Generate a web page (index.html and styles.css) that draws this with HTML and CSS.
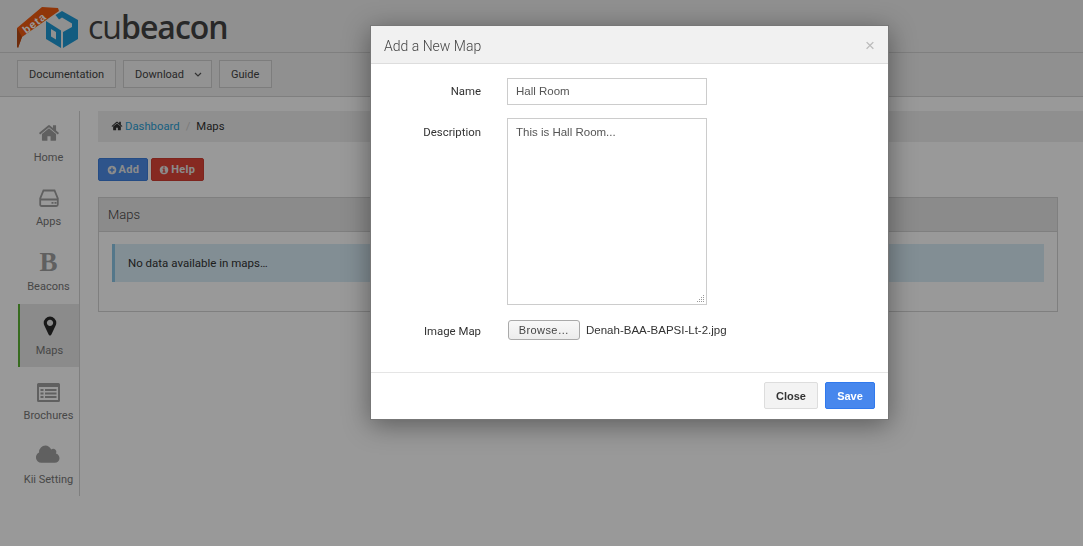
FILE: index.html
```html
<!DOCTYPE html>
<html lang="en">
<head>
<meta charset="UTF-8">
<meta name="viewport" content="width=device-width, initial-scale=1.0">
<title>Cubeacon - Maps</title>
<link rel="stylesheet" href="styles.css">
</head>
<body>
<header class="top">
  <div class="logo">
    <svg class="ribbon" width="42" height="42" viewBox="0 0 42 42">
      <polygon points="25,0 41,1 42,4 5,30 1,41 0,21" fill="#f05a10"/>
      <polygon points="0,21 5,30 1,41 0,40" fill="#b84a14"/>
    </svg>
    <span class="beta">beta</span>
    <svg class="cube" width="33" height="37" viewBox="0 0 33 37">
      <path d="M17 0 33 9V28L18 37V21L27 16V12.500L17 6.500 14 8.500 10.500 4Z" fill="#1f9ad6"/>
      <path fill-rule="evenodd" d="M1 10 16 19.500V37L1 28ZM6 18V25.500L11 28.500V21Z" fill="#1f9ad6"/>
    </svg>
    <span class="word"><span class="word-thin">cu</span>beacon</span>
  </div>
</header>
<nav class="menu">
  <a class="menu-btn">Documentation</a>
  <a class="menu-btn menu-drop">Download
    <svg class="chev" width="8" height="5" viewBox="0 0 8 5"><path d="M1 1 4 4 7 1" fill="none" stroke="#555" stroke-width="1.2"/></svg>
  </a>
  <a class="menu-btn">Guide</a>
</nav>

<div class="layout">
  <aside class="side">
    <a class="side-item">
      <svg width="22" height="22" viewBox="0 0 1792 1792"><path d="M1472 992v480q0 26-19 45t-45 19h-384v-384h-256v384h-384q-26 0-45-19t-19-45v-480q0-1 .5-3t.5-3l575-474 575 474q1 2 1 6zm223-69l-62 74q-8 9-21 11h-3q-13 0-21-7l-692-577-692 577q-12 8-24 7-13-2-21-11l-62-74q-8-10-7-23.5t11-21.5l719-599q32-26 76-26t76 26l244 204v-195q0-14 9-23t23-9h192q14 0 23 9t9 23v408l219 182q10 8 11 21.5t-7 23.5z"/></svg>
      <span>Home</span>
    </a>
    <a class="side-item">
      <svg width="20" height="20" viewBox="0 0 20 20"><path d="M4.500 2.500H15.500L18.800 10.500V16.500Q18.800 18 17.300 18H2.700Q1.200 18 1.200 16.500V10.500Z M1.500 11.500H18.500" fill="none" stroke-width="1.800"/><path d="M12.500 14h2v1.800h-2zM15.500 14h2v1.800h-2z" stroke="none"/></svg>
      <span>Apps</span>
    </a>
    <a class="side-item">
      <b class="bold-b">B</b>
      <span>Beacons</span>
    </a>
    <a class="side-item active">
      <svg width="22" height="22" viewBox="0 0 1792 1792"><path d="M1152 640q0-106-75-181t-181-75-181 75-75 181 75 181 181 75 181-75 75-181zm256 0q0 109-33 179l-364 774q-16 33-47.500 52t-67.500 19-67.500-19-46.500-52l-365-774q-33-70-33-179 0-212 150-362t362-150 362 150 150 362z"/></svg>
      <span>Maps</span>
    </a>
    <a class="side-item">
      <svg width="23" height="19" viewBox="0 0 23 19"><path fill-rule="evenodd" d="M1.500 0H21.500Q23 0 23 1.500V17.500Q23 19 21.500 19H1.500Q0 19 0 17.500V1.500Q0 0 1.500 0ZM2 4V17H21V4Z" stroke="none"/><path d="M3.500 6h3v2h-3zM8 6h11.500v2H8zM3.500 9.500h3v2h-3zM8 9.500h11.500v2H8zM3.500 13h3v2h-3zM8 13h11.500v2H8z" stroke="none"/></svg>
      <span>Brochures</span>
    </a>
    <a class="side-item">
      <svg width="25" height="22" viewBox="0 0 1920 1792"><path d="M1856 1152q0 159-112.500 271.500t-271.500 112.500h-1088q-185 0-316.500-131.500t-131.500-316.500q0-132 71-241.500t187-163.500q-2-28-2-43 0-212 150-362t362-150q158 0 286.500 88t187.500 230q70-62 166-62 106 0 181 75t75 181q0 75-41 138 129 30 213 134.500t84 239.500z"/></svg>
      <span>Kii Setting</span>
    </a>
  </aside>

  <main class="content">
    <div class="crumbs">
      <svg width="12" height="12" viewBox="0 0 1792 1792"><path d="M1472 992v480q0 26-19 45t-45 19h-384v-384h-256v384h-384q-26 0-45-19t-19-45v-480q0-1 .5-3t.5-3l575-474 575 474q1 2 1 6zm223-69l-62 74q-8 9-21 11h-3q-13 0-21-7l-692-577-692 577q-12 8-24 7-13-2-21-11l-62-74q-8-10-7-23.500t11-21.500l719-599q32-26 76-26t76 26l244 204v-195q0-14 9-23t23-9h192q14 0 23 9t9 23v408l219 182q10 8 11 21.500t-7 23.500z"/></svg>
      <a class="crumb-link">Dashboard</a>
      <span class="crumb-sep">/</span>
      <span>Maps</span>
    </div>
    <div class="actions">
      <button class="act act-blue">
        <svg width="10" height="10" viewBox="0 0 1792 1792"><path d="M1344 960v-128q0-26-19-45t-45-19h-256v-256q0-26-19-45t-45-19h-128q-26 0-45 19t-19 45v256h-256q-26 0-45 19t-19 45v128q0 26 19 45t45 19h256v256q0 26 19 45t45 19h128q26 0 45-19t19-45v-256h256q26 0 45-19t19-45zm320-64q0 209-103 385.500t-279.500 279.500-385.500 103-385.500-103-279.500-279.500-103-385.500 103-385.500 279.500-279.500 385.500-103 385.500 103 279.500 279.500 103 385.500z"/></svg>
        Add</button>
      <button class="act act-red">
        <svg width="10" height="10" viewBox="0 0 1792 1792"><path d="M1152 1376v-160q0-14-9-23t-23-9h-96v-512q0-14-9-23t-23-9h-320q-14 0-23 9t-9 23v160q0 14 9 23t23 9h96v320h-96q-14 0-23 9t-9 23v160q0 14 9 23t23 9h448q14 0 23-9t9-23zm-128-896v-160q0-14-9-23t-23-9h-192q-14 0-23 9t-9 23v160q0 14 9 23t23 9h192q14 0 23-9t9-23zm640 416q0 209-103 385.500t-279.500 279.500-385.500 103-385.500-103-279.500-279.500-103-385.500 103-385.500 279.500-279.500 385.500-103 385.500 103 279.500 279.500 103 385.500z"/></svg>
        Help</button>
    </div>
    <section class="panel">
      <h2 class="panel-head">Maps</h2>
      <div class="panel-body">
        <div class="alert">No data available in maps…</div>
      </div>
    </section>
  </main>
</div>

<div class="backdrop"></div>

<div class="modal">
  <div class="modal-head">
    <h3>Add a New Map</h3>
    <span class="close-x">×</span>
  </div>
  <form class="modal-body">
    <div class="row row-name">
      <label>Name</label>
      <input class="field" type="text" value="Hall Room">
    </div>
    <div class="row row-desc">
      <label>Description</label>
      <div class="area-wrap">
        <textarea class="field area">This is Hall Room...</textarea>
        <svg class="grip" width="9" height="9" viewBox="0 0 9 9"><path d="M7 1h1v1H7zM5 3h1v1H5zM7 3h1v1H7zM3 5h1v1H3zM5 5h1v1H5zM7 5h1v1H7zM1 7h1v1H1zM3 7h1v1H3zM5 7h1v1H5zM7 7h1v1H7z" fill="#999"/></svg>
      </div>
    </div>
    <div class="row row-file">
      <label>Image Map</label>
      <button type="button" class="browse">Browse…</button>
      <span class="file-name">Denah-BAA-BAPSI-Lt-2.jpg</span>
    </div>
  </form>
  <div class="modal-foot">
    <button class="foot-btn foot-close">Close</button>
    <button class="foot-btn foot-save">Save</button>
  </div>
</div>
</body>
</html>
```

FILE: styles.css
```css
* {
  box-sizing: border-box;
}
html, body {
  height: 100%;
}
body {
  margin: 0;
  background: #fff;
  font-family: Roboto, sans-serif;
  font-size: 11px;
  color: #333;
  overflow: hidden;
}
.top {
  height: 53px;
  background: #f0f0f0;
  border-bottom: 1px solid #d4d4d4;
  padding-left: 17px;
}
.logo {
  position: relative;
  display: flex;
  align-items: flex-start;
  height: 52px;
}
.ribbon {
  position: absolute;
  left: 0;
  top: 7px;
}
.beta {
  position: absolute;
  left: 4px;
  top: 17px;
  font: bold 11px "Liberation Sans", sans-serif;
  letter-spacing: 1px;
  color: #fff;
  transform: rotate(-38deg);
}
.cube {
  margin: 11px 0 0 28px;
}
.word {
  margin: 5px 0 0 10px;
  font-family: "Open Sans", sans-serif;
  font-size: 32px;
  font-weight: 600;
  line-height: 44px;
  letter-spacing: -1px;
  color: #444;
}
.word-thin {
  font-weight: 400;
}
.menu {
  height: 44px;
  background: #f0f0f0;
  border-bottom: 1px solid #d4d4d4;
  padding: 7px 17px 0;
  display: flex;
  gap: 7px;
}
.menu-btn {
  height: 28px;
  padding: 0 11px;
  background: #f5f5f5;
  border: 1px solid #d0d0d0;
  display: flex;
  align-items: center;
  font-size: 11px;
  color: #444;
}
.menu-drop {
  padding-right: 9px;
}
.menu-btn:last-child {
  width: 53px;
}
.chev {
  margin-left: 10px;
}
.layout {
  display: flex;
  padding: 14px 0 0 18px;
}
.side {
  width: 62px;
  height: 385px;
  border-right: 1px solid #d4d4d4;
  flex: none;
}
.side-item {
  height: 63px;
  margin-bottom: 1.400px;
  display: flex;
  flex-direction: column;
  align-items: center;
  justify-content: flex-end;
  padding-bottom: 9px;
  color: #777;
  gap: 7px;
}
.side-item svg {
  fill: #a0a0a0;
  stroke: #a0a0a0;
  stroke-width: 0;
}
.side-item span {
  line-height: 14px;
}
.bold-b {
  font: bold 27px/22px "Liberation Serif", serif;
  color: #a0a0a0;
}
.active {
  background: #e8e8e8;
  border-left: 2px solid #5cb335;
}
.active svg {
  fill: #2b2b2b;
  stroke: #2b2b2b;
}
.content {
  flex: 1;
  padding-left: 18px;
}
.crumbs {
  height: 31px;
  background: #efefef;
  padding: 0 0 1px 13px;
  display: flex;
  align-items: center;
  gap: 2px;
  font-size: 11.300px;
  color: #333;
}
.crumbs svg {
  fill: #333;
}
.crumb-link {
  color: #2a9fd6;
}
.crumb-sep {
  color: #ccc;
  margin: 0 4px;
}
.actions {
  display: flex;
  gap: 3px;
  margin-top: 16px;
}
.act {
  height: 23px;
  padding: 0 7.500px;
  border-radius: 2px;
  display: flex;
  align-items: center;
  gap: 2px;
  font: bold 11px Roboto, sans-serif;
  letter-spacing: .3px;
  color: #e8e8e8;
}
.act svg {
  fill: #e8e8e8;
}
.act-blue {
  background: #4d8de8;
  border: 1px solid #3f7fdc;
}
.act-red {
  background: #e04538;
  border: 1px solid #d03f33;
}
.panel {
  margin: 16px 25px 0 0;
  height: 115px;
  border: 1px solid #d4d4d4;
}
.panel-head {
  margin: 0;
  height: 34px;
  padding-left: 9px;
  background: #e8e8e8;
  border-bottom: 1px solid #d4d4d4;
  font-size: 13px;
  font-weight: 300;
  line-height: 33px;
  color: #444;
}
.panel-body {
  padding: 12px 13px;
}
.alert {
  height: 38px;
  padding-left: 13px;
  background: #d9edf7;
  border-left: 3px solid #8cc7e6;
  font-size: 11.500px;
  line-height: 38px;
  color: #333;
}
.backdrop {
  position: fixed;
  inset: 0;
  background: rgba(0, 0, 0, .4);
}
.modal {
  position: absolute;
  left: 370px;
  top: 25px;
  width: 519px;
  height: 395px;
  background: #fff;
  border: 1px solid #777;
  box-shadow: 0 5px 25px rgba(0, 0, 0, .4);
}
.modal-head {
  height: 38px;
  background: #f1f1f1;
  border-bottom: 1px solid #ddd;
  display: flex;
  align-items: center;
  justify-content: space-between;
  padding: 3px 13px 0;
}
.modal-head h3 {
  margin: 0;
  font-size: 14px;
  font-weight: 300;
  color: #444;
}
.close-x {
  font: 17px "Liberation Sans", sans-serif;
  color: #bbb;
}
.modal-body {
  height: 309px;
  border-bottom: 1px solid #e5e5e5;
}
.row {
  display: flex;
  align-items: flex-start;
}
.row label {
  width: 110px;
  text-align: right;
  flex: none;
  margin-right: 26px;
  color: #333;
  font-size: 11.400px;
}
.row-name {
  padding-top: 14px;
  align-items: center;
}
.row-name label {
  padding-bottom: 2px;
}
.field {
  display: block;
  width: 200px;
  border: 1px solid #ccc;
  padding: 0 8px;
  font: 11.500px "Liberation Sans", sans-serif;
  color: #555;
  background: #fff;
  border-radius: 0;
  outline: none;
}
.row-name .field {
  height: 27px;
  padding-bottom: 2px;
}
.row-desc {
  padding-top: 13px;
}
.row-desc label {
  padding-top: 7px;
}
.area-wrap {
  position: relative;
}
.area {
  height: 187px;
  padding-top: 7px;
  resize: none;
}
.grip {
  position: absolute;
  right: 2px;
  bottom: 2px;
}
.row-file {
  padding-top: 15px;
  align-items: center;
}
.row-file label {
  margin-right: 27px;
  padding-top: 2px;
}
.browse {
  height: 20px;
  width: 72px;
  padding: 0;
  background: linear-gradient(#f8f8f8, #ececec);
  border: 1px solid #aaa;
  border-radius: 3px;
  font: 11px "Liberation Sans", sans-serif;
  letter-spacing: .4px;
  color: #444;
}
.file-name {
  margin-left: 6px;
  font: 11.500px "Liberation Sans", sans-serif;
  color: #333;
}
.modal-foot {
  display: flex;
  justify-content: flex-end;
  gap: 7px;
  padding: 9px 13px 0 0;
}
.foot-btn {
  height: 27px;
  font: bold 11px "Liberation Sans", sans-serif;
  border-radius: 2px;
}
.foot-close {
  width: 54px;
  background: #f3f3f3;
  border: 1px solid #ddd;
  color: #333;
}
.foot-save {
  width: 50px;
  background: #4787ed;
  border: 1px solid #3079ed;
  color: #fff;
}
```
